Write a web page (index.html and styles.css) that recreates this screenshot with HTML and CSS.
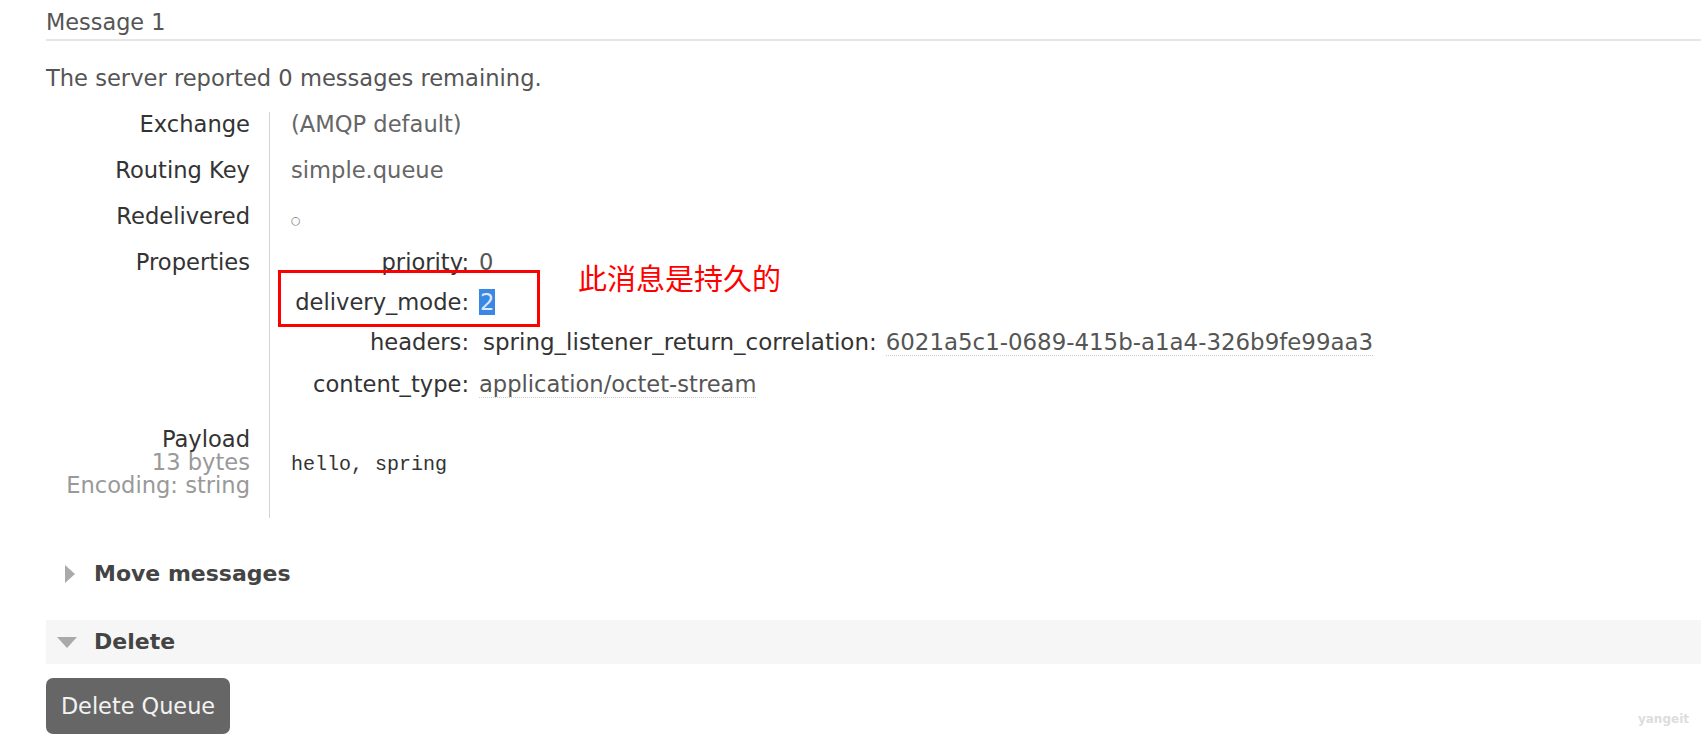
FILE: index.html
```html
<!doctype html>
<html lang="en">
    <head>
        <title>Queue simple.queue</title>
        <link rel="stylesheet" href="styles.css">
    </head>
    <body>
        <div id="main" class="main">
            <h2 class="msg-title">Message 1</h2>
            <p class="msg-count">The server reported 0 messages remaining.</p>

            <table class="facts">
                <tr>
                    <th>Exchange</th>
                    <td>(AMQP default)</td>
                </tr>
                <tr>
                    <th>Routing Key</th>
                    <td>simple.queue</td>
                </tr>
                <tr>
                    <th>Redelivered</th>
                    <td><span class="bool">○</span></td>
                </tr>
                <tr>
                    <th>Properties</th>
                    <td class="props">
                        <table class="mini">
                            <tr>
                                <th>priority:</th>
                                <td>0</td>
                            </tr>
                            <tr>
                                <th>delivery_mode:</th>
                                <td><span class="selected">2</span></td>
                            </tr>
                            <tr class="headers-row">
                                <th>headers:</th>
                                <td>
                                    <table class="nested">
                                        <tr>
                                            <th>spring_listener_return_correlation:</th>
                                            <td><span class="dotted">6021a5c1-0689-415b-a1a4-326b9fe99aa3</span></td>
                                        </tr>
                                    </table>
                                </td>
                            </tr>
                            <tr>
                                <th>content_type:</th>
                                <td><span class="dotted">application/octet-stream</span></td>
                            </tr>
                        </table>
                    </td>
                </tr>
                <tr class="payload-row">
                    <th>
                        Payload
                        <sub>13 bytes</sub>
                        <sub>Encoding: string</sub>
                    </th>
                    <td><pre class="payload">hello, spring</pre></td>
                </tr>
            </table>

            <div class="section">
                <h3 class="section-head"><span class="arrow arrow-right"></span>Move messages</h3>
            </div>

            <div class="section open">
                <h3 class="section-head"><span class="arrow arrow-down"></span>Delete</h3>
                <button class="btn-delete">Delete Queue</button>
            </div>

            <!-- annotation drawn over the screenshot -->
            <div class="note-box"></div>
            <div class="note-text">此消息是持久的</div>
            <div class="watermark">yangeit</div>
        </div>
    </body>
</html>
```

FILE: styles.css
```css
body {
    font-family: "DejaVu Sans", Verdana, sans-serif;
    font-size: 22.6px;
    color: #555;
    background: #fff;
    margin: 0;
    padding: 0;
}
.main {
    position: relative;
    height: 736px;
    padding-left: 46px;
    overflow: hidden;
}
.msg-title {
    font-size: 22.4px;
    font-weight: normal;
    line-height: 24px;
    color: #555;
    margin: 0;
    padding: 10px 0 5px;
    border-bottom: 2px solid #e6e6e6;
}
.msg-count {
    line-height: 24px;
    margin: 25px 0 22px;
}
.facts {
    border-collapse: collapse;
}
.facts th,
.facts td {
    line-height: 24px;
    padding: 0 0 22px;
    vertical-align: top;
}
.facts > tbody > tr > th {
    width: 204px;
    text-align: right;
    font-weight: normal;
    color: #333;
    padding-right: 19px;
}
.facts > tbody > tr > td {
    border-left: 1px solid #d4d4d4;
    padding-left: 21px;
    color: #666;
}
.bool {
    font-size: 11px;
    line-height: 11px;
    color: #777;
}
.facts > tbody > tr > td.props {
    padding-bottom: 16px;
}
.mini {
    border-collapse: collapse;
}
.mini > tbody > tr > th {
    width: 178px;
    text-align: right;
    font-weight: normal;
    color: #333;
    padding: 0 10px 16px 0;
}
.mini > tbody > tr > td {
    color: #555;
    padding: 0 0 16px;
}
.mini > tbody > tr.headers-row > th,
.mini > tbody > tr.headers-row > td {
    padding-bottom: 18px;
}
.nested {
    border-collapse: collapse;
}
.nested th,
.nested td {
    padding: 0;
    line-height: 24px;
}
.nested th {
    font-weight: normal;
    font-size: 23px;
    color: #333;
    padding: 0 9px 0 4px;
}
.nested td {
    color: #555;
    font-size: 22.9px;
}
.dotted {
    border-bottom: 1px dotted #ccc;
}
.selected {
    background: #3a88e4;
    color: #dce9fb;
    padding: 0 1px;
}
.payload-row th {
    line-height: 23px;
    padding-top: 0;
    padding-bottom: 21px;
}
.payload-row th sub {
    display: block;
    font-size: 22.6px;
    color: #999;
    vertical-align: baseline;
    line-height: 23px;
}
.payload-row td {
    vertical-align: middle;
}
.payload {
    font-family: "Liberation Mono", "Courier New", monospace;
    font-size: 20px;
    color: #333;
    margin: 0;
    padding-top: 6px;
}
.section {
    margin-top: 44px;
}
.section.open {
    margin-top: 34px;
}
.section-head {
    display: flex;
    align-items: center;
    font-size: 22px;
    line-height: 24px;
    color: #444;
    margin: 0;
    padding-left: 11px;
}
.open .section-head {
    background: #f6f6f6;
    padding-top: 10px;
    padding-bottom: 10px;
}
.arrow {
    display: inline-block;
    width: 37px;
    height: 18px;
    position: relative;
}
.arrow::before {
    content: "";
    position: absolute;
}
.arrow-right::before {
    left: 8px;
    top: 0;
    border-left: 10px solid #aaa;
    border-top: 9px solid transparent;
    border-bottom: 9px solid transparent;
}
.arrow-down::before {
    left: 0;
    top: 4px;
    border-top: 11px solid #aaa;
    border-left: 10px solid transparent;
    border-right: 10px solid transparent;
}
.btn-delete {
    display: block;
    margin-top: 14px;
    width: 184px;
    height: 56px;
    background: #666;
    color: #f2f2f2;
    border: none;
    border-radius: 7px;
    font-family: "DejaVu Sans", Verdana, sans-serif;
    font-size: 22.4px;
    padding: 0;
    cursor: pointer;
}
.note-box {
    position: absolute;
    left: 278px;
    top: 270px;
    width: 256px;
    height: 51px;
    border: 3px solid #f00;
}
.note-text {
    position: absolute;
    left: 578px;
    top: 259px;
    font-family: "Noto Sans CJK SC", sans-serif;
    font-size: 29px;
    line-height: 36px;
    color: #f00;
}
.watermark {
    position: absolute;
    right: 12px;
    bottom: 10px;
    font-family: "DejaVu Sans", sans-serif;
    font-size: 12px;
    font-weight: bold;
    color: #ddd;
}
```
